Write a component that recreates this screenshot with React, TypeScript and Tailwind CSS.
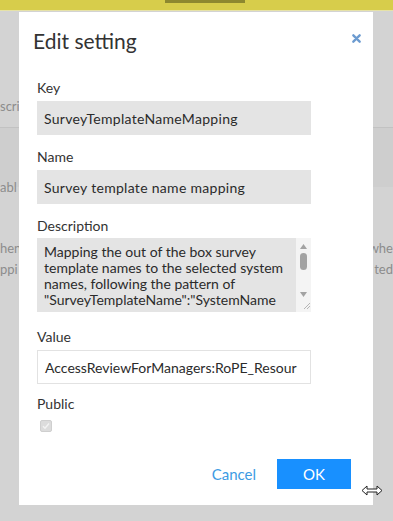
import React from 'react';

const font = "font-['Lato',sans-serif]";

const BgRow = ({ left, right, className = '' }: { left?: string; right?: string; className?: string }) => (
    <div className={`flex items-center justify-between text-[13px] text-[#8c8c8c] ${className}`}>
        <span className="whitespace-nowrap">{left}</span>
        <span className="whitespace-nowrap">{right}</span>
    </div>
);

const Field = ({ label, value, disabled = true, className = '' }: { label: string; value: string; disabled?: boolean; className?: string }) => (
    <div className={className}>
        <div className="text-[14px] leading-[20px] text-[#333]">{label}</div>
        <div
            className={`mt-[3px] w-[274px] h-[34px] flex items-center px-[7px] text-[14px] text-[#2b2b2b] whitespace-nowrap overflow-hidden ${
                disabled ? 'bg-[#e4e4e4] tracking-[0.3px]' : 'bg-white border border-[#e2e2e2]'
            }`}
        >
            {value}
        </div>
    </div>
);

const descLines = [
    'Mapping the out of the box survey',
    'template names to the selected system',
    'names, following the pattern of',
    '"SurveyTemplateName":"SystemName',
];

export default function App() {
    return (
        <div className={`relative w-[393px] h-[521px] overflow-hidden bg-[#d3d3d3] ${font}`}>
            {/* Top bar */}
            <div className="h-[11px] bg-[#d7cd4b] border-b border-[#e6e2a8]">
                <div className="ml-[165px] w-[80px] h-[3px] bg-[#8d882f]" />
            </div>

            {/* Page behind the overlay */}
            <BgRow left="scri" className="mt-[88px] h-[16px]" />
            <div className="mt-[12px] h-[1px] bg-[#c2c2c2]" />
            <div className="h-[59px] bg-[#cecece]" />
            <BgRow left="abl" className="h-[16px] -mt-[7px]" />
            <BgRow left="hen" right="whe" className="mt-[45px] h-[16px]" />
            <BgRow left="ppi" right="ted" className="mt-[5px] h-[16px]" />

            {/* Modal */}
            <div className="absolute left-[19px] top-[12px] w-[354px] h-[493px] bg-white">
                <div className="flex items-start justify-between pl-[14px] pr-[12px] pt-[14px]">
                    <h2 className="text-[21px] leading-[30px] text-[#333]">Edit setting</h2>
                    <svg className="mt-[8px] w-[9px] h-[9px]" viewBox="0 0 10 10">
                        <path d="M1.5 1.5 L8.5 8.5 M8.5 1.5 L1.5 8.5" stroke="#6c9bd0" strokeWidth="2.6" strokeLinecap="round" />
                    </svg>
                </div>

                <div className="pl-[18px]">
                    <Field label="Key" value="SurveyTemplateNameMapping" className="mt-[22px]" />
                    <Field label="Name" value="Survey template name mapping" className="mt-[12px]" />

                    <div className="mt-[12px]">
                        <div className="text-[14px] leading-[20px] text-[#333]">Description</div>
                        <div className="mt-[2px] w-[274px] h-[74px] bg-[#e4e4e4] flex">
                            <div className="flex-1 pl-[7px] pt-[6px] text-[14px] leading-[16px] text-[#2b2b2b] whitespace-nowrap overflow-hidden">
                                {descLines.map((l) => (
                                    <div key={l}>{l}</div>
                                ))}
                            </div>
                            <div className="w-[15px] h-full bg-[#f4f4f4] flex flex-col items-center">
                                <svg className="mt-[6px] w-[7px] h-[5px]" viewBox="0 0 7 5">
                                    <path d="M3.5 0 L7 5 L0 5 Z" fill="#a3a3a3" />
                                </svg>
                                <div className="mt-[4px] w-[7px] h-[17px] rounded-full bg-[#a3a3a3]" />
                                <div className="flex-1" />
                                <svg className="mb-[3px] w-[7px] h-[5px]" viewBox="0 0 7 5">
                                    <path d="M0 0 L7 0 L3.5 5 Z" fill="#a3a3a3" />
                                </svg>
                                <svg className="mb-[2px] ml-[4px] w-[10px] h-[10px]" viewBox="0 0 10 10">
                                    <path d="M9 3 L3 9 M9 6 L6 9" stroke="#b5b5b5" strokeWidth="1" />
                                </svg>
                            </div>
                        </div>
                    </div>

                    <Field label="Value" value="AccessReviewForManagers:RoPE_Resour" disabled={false} className="mt-[15px]" />

                    <div className="mt-[10px]">
                        <div className="text-[14px] leading-[20px] text-[#333]">Public</div>
                        <div className="mt-[6px] ml-[3px] w-[12px] h-[12px] rounded-[2px] bg-[#dcdcdc] border border-[#cfcfcf] flex items-center justify-center">
                            <svg className="w-[8px] h-[8px]" viewBox="0 0 8 8">
                                <path d="M1 4.2 L3 6.2 L7 1.5" fill="none" stroke="#f3f3f3" strokeWidth="1.4" />
                            </svg>
                        </div>
                    </div>

                    <div className="mt-[27px] flex items-center justify-end pr-[22px] gap-[21px]">
                        <button className="text-[15px] text-[#3d9be3]">Cancel</button>
                        <button className="w-[74px] h-[30px] bg-[#1890ff] text-white text-[15px]">OK</button>
                    </div>
                </div>
            </div>

            {/* Resize cursor */}
            <svg className="absolute left-[361px] top-[485px] w-[22px] h-[11px]" viewBox="0 0 22 11">
                <path
                    d="M1 5.5 L6 1 L6 4 L16 4 L16 1 L21 5.5 L16 10 L16 7 L6 7 L6 10 Z"
                    fill="#fff"
                    stroke="#222"
                    strokeWidth="1"
                    strokeLinejoin="round"
                />
            </svg>
        </div>
    );
}
